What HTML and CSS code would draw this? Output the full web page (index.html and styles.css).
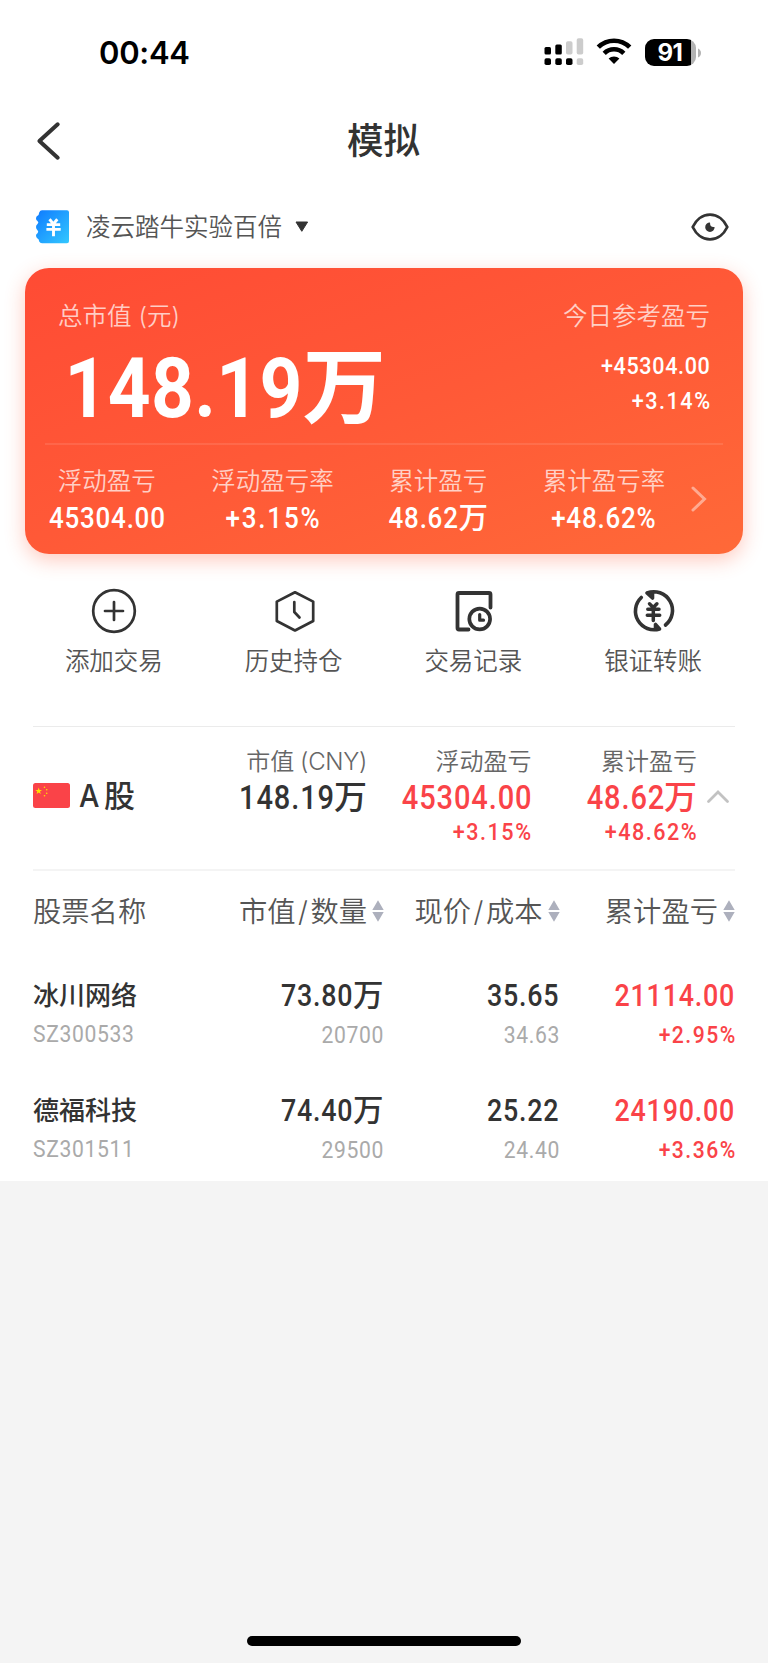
FILE: index.html
```html
<!DOCTYPE html>
<html lang="zh-CN">
<head>
<meta charset="utf-8">
<title>模拟</title>
<link rel="stylesheet" href="styles.css">
</head>
<body>
<div class="sheet">
  <div class="status">
    <span class="time">00:44</span>
    <div class="status-icons">
      <svg width="40" height="28" viewBox="0 0 40 28">
        <g fill="#000"><rect x="0.5" y="9" width="6.5" height="7.5" rx="1.5"/><rect x="11.3" y="6.5" width="6.5" height="10" rx="1.5"/><rect x="0.5" y="20.3" width="6.5" height="6.7" rx="1.8"/><rect x="11.3" y="20.3" width="6.5" height="6.7" rx="1.8"/><rect x="22" y="20.3" width="6.5" height="6.7" rx="1.8"/></g>
        <g fill="#ccc"><rect x="22" y="3.3" width="6.5" height="13.2" rx="1.8"/><rect x="32.7" y="0.3" width="6.5" height="16.2" rx="1.8"/><rect x="32.7" y="20.3" width="6.5" height="6.7" rx="1.8"/></g>
      </svg>
      <svg width="36" height="28" viewBox="0 0 36 28">
        <path d="M2.3 9.2A22.3 22.3 0 0 1 33.7 9.2" fill="none" stroke="#000" stroke-width="4.7"/>
        <path d="M8.2 15.3A14 14 0 0 1 27.8 15.3" fill="none" stroke="#000" stroke-width="4.6"/>
        <path d="M12.6 20.6A7.8 7.8 0 0 1 23.4 20.6L18 26Z" fill="#000"/>
      </svg>
      <div class="battery"><span class="level">91</span>
        <svg class="battery-cap" width="4" height="10" viewBox="0 0 4 10"><path d="M0 0.5Q3 2 3 5Q3 8 0 9.5Z" fill="#b3b3b3"/></svg>
      </div>
    </div>
  </div>

  <header class="nav">
    <svg class="back" width="26" height="42" viewBox="0 0 26 42"><path d="M22.7 4.3L4.4 21L22.7 37.7" fill="none" stroke="#333" stroke-width="4" stroke-linecap="round" stroke-linejoin="round"/></svg>
    <h1>模拟</h1>
  </header>

  <div class="account">
    <svg width="34" height="34" viewBox="0 0 34 34">
      <defs><linearGradient id="book" x1="0" y1="0" x2="1" y2="1"><stop offset="0" stop-color="#0f7bff"/><stop offset="1" stop-color="#33c8ff"/></linearGradient></defs>
      <path d="M6 0.3H31Q33 0.3 33 2.3V31.3Q33 33.3 31 33.3H6Q4 33.3 3.2 31.5Q3 29 1.5 28.5Q0 27.5 0 25.5Q0 24 1.5 23.2A2 2 0 0 0 1.5 20.3Q0 19 0 17Q0 15 1.5 14A2 2 0 0 0 1.5 11Q0 10 0 8.5Q0 6.5 1.5 5.7Q3 5 3.2 2.5Q4 0.3 6 0.3Z" fill="url(#book)"/>
      <path d="M13.500 9.300L17.400 14L21.300 9.300M10.800 14.600H24.200M10.400 19.400H24.700M17.500 14V26.300" fill="none" stroke="#fff" stroke-width="2.900"/>
    </svg>
    <span class="account-name">凌云踏牛实验百倍</span>
    <svg class="caret" width="14" height="12" viewBox="0 0 14 12"><path d="M1 1H12.600L6.800 10.300Z" fill="#333" stroke="#333" stroke-linejoin="round"/></svg>
    <svg class="eye" width="38" height="30" viewBox="0 0 38 30">
      <path d="M1.700 15C4.800 8.500 11 2.700 19 2.700S33.200 8.500 36.300 15C33.200 21.500 27 27.300 19 27.300S4.800 21.500 1.700 15Z" fill="none" stroke="#333" stroke-width="2.800" stroke-linejoin="round"/>
      <path d="M19 10.500A4.700 4.700 0 1 0 23.600 15Q19 15.800 19 10.500Z" fill="#333"/>
    </svg>
  </div>

  <section class="card">
    <div class="total">
      <div>
        <div class="card-label">总市值 (元)</div>
        <div class="big"><span class="num">148.19</span>万</div>
      </div>
      <div class="today">
        <div class="card-label">今日参考盈亏</div>
        <div class="today-val"><span class="num">+45304.00</span></div>
        <div class="today-val"><span class="num pct">+3.14%</span></div>
      </div>
    </div>
    <div class="stats">
      <div><div class="card-label">浮动盈亏</div><div class="stat-val"><span class="num">45304.00</span></div></div>
      <div><div class="card-label">浮动盈亏率</div><div class="stat-val"><span class="num pct">+3.15%</span></div></div>
      <div><div class="card-label">累计盈亏</div><div class="stat-val unit"><span class="num">48.62</span>万</div></div>
      <div><div class="card-label">累计盈亏率</div><div class="stat-val"><span class="num">+48.62%</span></div></div>
      <svg width="18" height="28" viewBox="0 0 18 28"><path d="M3 3L14.500 14L3 25" fill="none" stroke="#fff" stroke-opacity="0.45" stroke-width="3" stroke-linecap="round"/></svg>
    </div>
  </section>

  <nav class="actions">
    <div><svg width="46" height="46" viewBox="0 0 46 46" fill="none" stroke="#333" stroke-width="2.700" stroke-linecap="round"><circle cx="23" cy="23" r="20.800"/><path d="M14 23H32M23 14V32"/></svg><span>添加交易</span></div>
    <div><svg width="46" height="46" viewBox="0 0 46 46" fill="none" stroke="#333" stroke-width="2.700" stroke-linecap="round" stroke-linejoin="round"><path d="M24 4.300L42.200 13.600V33L24 42.500L5.800 33V13.600Z"/><path d="M23.300 14V24L28.500 29.500"/></svg><span>历史持仓</span></div>
    <div><svg width="46" height="46" viewBox="-1 0 46 46" fill="none" stroke="#333" stroke-width="3.800" stroke-linecap="round" stroke-linejoin="round"><path d="M17.500 41.500H8Q6.500 41.500 6.500 40V6.500Q6.500 5 8 5H38Q39.500 5 39.500 6.500V19.500"/><circle cx="28.700" cy="31" r="10.400" stroke-width="3.700"/><path d="M28.700 26.500V32.200H32.500" stroke-width="3.200"/></svg><span>交易记录</span></div>
    <div><svg width="46" height="46" viewBox="0.500 0 46 46" fill="none" stroke="#333" stroke-width="3.600" stroke-linecap="round" stroke-linejoin="round"><path d="M11.800 9.500A18.700 18.700 0 0 0 30 41L26 36.500V41M36 37A18.700 18.700 0 0 0 17.500 5L23 10V5"/><path d="M20 15.800L23.700 19.500L27.400 15.800M18.300 21.300H29.500M17.800 27.200H30.200M23.800 21V32.500" stroke-width="3.500"/></svg><span>银证转账</span></div>
  </nav>

  <section class="market">
    <div class="market-name">
      <svg width="37" height="25" viewBox="0 0 37 25"><rect width="37" height="25" rx="2.500" fill="#fa4348"/><g fill="#ffe100"><path d="M5.700 4.500L6.500 7L9 7L7 8.500L7.800 11L5.700 9.500L3.600 11L4.300 8.500L2.300 7L4.900 7Z"/><circle cx="11.500" cy="4.200" r="0.800"/><circle cx="13.700" cy="6.700" r="0.800"/><circle cx="13.700" cy="10.200" r="0.800"/><circle cx="11.500" cy="12.700" r="0.800"/></g></svg>
      <strong><span>A</span>股</strong>
    </div>
    <div class="m-col"><div class="m-label">市值 <span class="ccy">(CNY)</span></div><div class="m-val"><span class="num">148.19</span>万</div></div>
    <div class="m-col red"><div class="m-label">浮动盈亏</div><div class="m-val"><span class="num">45304.00</span></div><div class="m-pct"><span class="num pct">+3.15%</span></div></div>
    <div class="m-col red"><div class="m-label">累计盈亏</div><div class="m-val"><span class="num">48.62</span>万</div><div class="m-pct"><span class="num pct">+48.62%</span></div></div>
    <svg class="fold" width="24" height="16" viewBox="0 0 24 16"><path d="M2.500 12.500L12 3L21.500 12.500" fill="none" stroke="#c2c2c2" stroke-width="2.800" stroke-linecap="round"/></svg>
  </section>

  <section class="table">
    <div class="row head">
      <div>股票名称</div>
      <div>市值<i>/</i>数量<svg width="12" height="22" viewBox="0 0 12 22"><path d="M6 0.300L11.700 10H0.300ZM6 21.700L11.700 12H0.300Z" fill="#adb0bd"/></svg></div>
      <div>现价<i>/</i>成本<svg width="12" height="22" viewBox="0 0 12 22"><path d="M6 0.300L11.700 10H0.300ZM6 21.700L11.700 12H0.300Z" fill="#adb0bd"/></svg></div>
      <div>累计盈亏<svg width="12" height="22" viewBox="0 0 12 22"><path d="M6 0.300L11.700 10H0.300ZM6 21.700L11.700 12H0.300Z" fill="#adb0bd"/></svg></div>
    </div>
    <div class="row stock">
      <div><div class="name">冰川网络</div><div class="sub"><span class="num">SZ300533</span></div></div>
      <div><div class="val"><span class="num">73.80</span>万</div><div class="sub"><span class="num">20700</span></div></div>
      <div><div class="val"><span class="num">35.65</span></div><div class="sub"><span class="num">34.63</span></div></div>
      <div class="red"><div class="val"><span class="num">21114.00</span></div><div class="sub"><span class="num pct">+2.95%</span></div></div>
    </div>
    <div class="row stock">
      <div><div class="name">德福科技</div><div class="sub"><span class="num">SZ301511</span></div></div>
      <div><div class="val"><span class="num">74.40</span>万</div><div class="sub"><span class="num">29500</span></div></div>
      <div><div class="val"><span class="num">25.22</span></div><div class="sub"><span class="num">24.40</span></div></div>
      <div class="red"><div class="val"><span class="num">24190.00</span></div><div class="sub"><span class="num pct">+3.36%</span></div></div>
    </div>
  </section>
</div>
<div class="home"></div>
</body>
</html>
```

FILE: styles.css
```css
* { box-sizing: border-box; }
body {
  margin: 0;
  min-height: 1663px;
  display: flex;
  flex-direction: column;
  justify-content: space-between;
  background: #f4f4f4;
  color: #333;
  font-family: Inter, "Noto Sans CJK SC", sans-serif;
}
svg { display: block; flex: none; }
.sheet { height: 1181px; background: #fff; overflow: hidden; }

/* Condensed numerals */
.num {
  display: inline-block;
  font-family: Roboto, sans-serif;
  letter-spacing: 0.03em;
  margin-right: -0.02em;
  transform: scaleX(0.88);
  transform-origin: right;
}
.num.pct { letter-spacing: 0.07em; margin-right: -0.06em; }

.status { height: 104px; padding: 0 67px 0 99px; display: flex; justify-content: space-between; align-items: center; color: #000; }
.time { font-size: 31px; font-weight: 600; line-height: 40px; padding-top: 2px; letter-spacing: -0.3px; }
.status-icons { display: flex; align-items: center; }
.status-icons > svg:nth-child(2) { margin: 0 13px 0 12px; }
.battery {
  position: relative;
  width: 51px; height: 27px;
  border-radius: 9px;
  background: linear-gradient(90deg, #000 46px, #b3b3b3 46px);
  margin-right: 5px;
}
.level { display: block; padding-right: 1px; text-align: center; color: #fff; font-size: 24px; font-weight: 700; line-height: 27px; letter-spacing: -0.5px; }
.battery-cap { position: absolute; left: 53px; top: 9px; }

.nav { height: 73px; display: grid; grid-template-columns: 119px 1fr 120px; align-items: center; }
.back { margin-left: 35px; }
h1 { margin: 0; font-size: 36.500px; font-weight: 500; line-height: 48px; text-align: center; padding-top: 1px; }

.account { height: 91px; padding: 9px 39px 0 36px; display: flex; align-items: center; }
.account-name { margin-left: 16px; font-size: 24.500px; font-weight: 350; line-height: 34px; color: #555; }
.caret { margin-left: 12.500px; }
.eye { margin-left: auto; }

.card {
  margin: 0 25px;
  height: 286px;
  border-radius: 24px;
  background: linear-gradient(160deg, #ff4b34 0%, #ff5937 50%, #ff6938 100%);
  box-shadow: 0 6px 20px rgba(255, 90, 56, 0.32);
  color: #fff;
  padding: 0 20px;
}
.card-label { font-size: 24.500px; line-height: 34px; font-weight: 350; color: rgba(255, 255, 255, 0.72); }
.total { height: 177px; padding: 31px 13px 0 13px; display: flex; justify-content: space-between; border-bottom: 2px solid rgba(255, 255, 255, 0.1); }
.big { font-size: 83px; line-height: 88px; margin-top: 10px; font-weight: 700; white-space: nowrap; }
.big .num { margin-left: -20px; margin-right: 0; letter-spacing: 0.005em; transform: scaleX(0.9); }
.today { text-align: right; }
.today-val { font-size: 24.500px; line-height: 35px; font-weight: 500; }
.today .card-label + .today-val { margin-top: 15px; }
.stats { margin-left: -21px; display: grid; grid-template-columns: repeat(4, 165.700px) 1fr; align-items: center; text-align: center; padding-top: 19px; }
.stat-val { font-size: 29.500px; line-height: 38px; font-weight: 500; height: 38px; }
.stats .num { transform-origin: center; }
.stats .unit .num { transform-origin: right; margin-left: -9px; }
.stats svg { margin: -2px 0 0 3px; }

.actions { margin: 34px 25px 0 24px; height: 138px; display: grid; grid-template-columns: repeat(4, 1fr); }
.actions div { display: flex; flex-direction: column; align-items: center; gap: 10px; }
.actions span { font-size: 24.500px; font-weight: 350; line-height: 34px; color: #555; }

.market { margin: 0 33px; height: 145px; padding-top: 18px; border-top: 1px solid #ebebeb; border-bottom: 2px solid #f4f4f4; display: grid; grid-template-columns: 168px 166px 164.500px 165.500px 1fr; }
.market-name { display: flex; align-items: center; gap: 9px; height: 101px; }
.market-name strong { font-size: 31px; font-weight: 500; line-height: 40px; padding-top: 1px; }
.market-name strong span { display: inline-block; width: 25px; transform: scaleX(0.93); transform-origin: left; }
.m-col { text-align: right; white-space: nowrap; }
.m-label { font-size: 24px; line-height: 34px; font-weight: 350; color: #666; }
.ccy { letter-spacing: -0.3px; margin-left: -1px; font-weight: 300; }
.m-val { font-size: 33px; line-height: 36px; font-weight: 500; }
.m-pct { font-size: 24.500px; line-height: 31px; font-weight: 500; }
.red .m-val, .red .m-pct, .red .val, .red .sub { color: #fa4348; }
.fold { margin: 44px 0 0 9px; }

.table { padding: 0 33px; }
.row { display: grid; grid-template-columns: 175px 176px 175.500px 175.500px; }
.row > div { text-align: right; white-space: nowrap; }
.row > div:first-child { text-align: left; }
.head { height: 82px; font-size: 28.300px; font-weight: 350; line-height: 82px; color: #555; }
.head > div { display: flex; align-items: center; justify-content: flex-end; }
.head > div:first-child { justify-content: flex-start; }
.head svg { margin: -2px 0 0 5px; }
.head i { font-style: normal; padding: 0 2.500px; }
.stock { height: 115px; padding-top: 22px; }
.stock > div:nth-child(2), .stock > div:nth-child(3) { padding-right: 0.500px; }
.name { font-size: 26px; line-height: 39px; font-weight: 500; padding-top: 1px; height: 39px; }
.val { font-size: 30.500px; line-height: 39px; font-weight: 500; }
.sub { font-size: 24px; line-height: 40px; color: #aaa; }
.red .sub { font-weight: 500; }
.row > div:first-child .num { transform-origin: left; }

.home { align-self: center; width: 274px; height: 10px; border-radius: 5px; background: #000; margin-bottom: 17px; }
```
